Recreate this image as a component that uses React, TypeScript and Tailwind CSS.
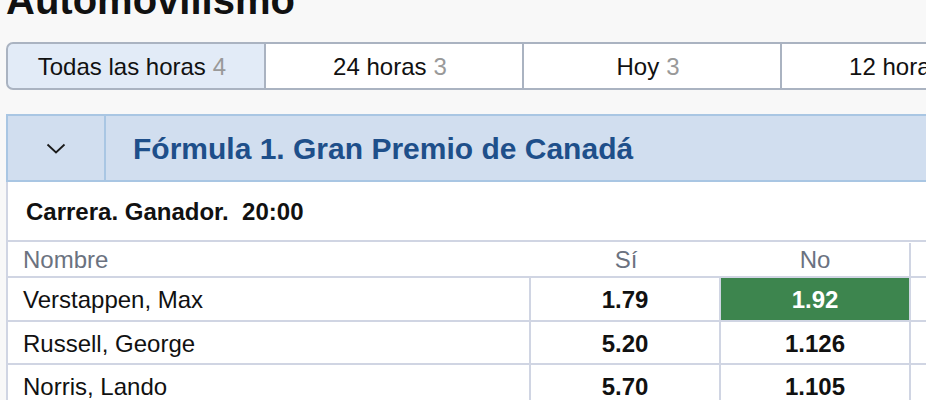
import React from "react";

const tabs = [
  { label: "Todas las horas", count: 4, active: true },
  { label: "24 horas", count: 3 },
  { label: "Hoy", count: 3 },
  { label: "12 horas", count: 3 },
];

const rows = [
  { name: "Verstappen, Max", si: "1.79", no: "1.92", extra: "1.85", hi: true },
  { name: "Russell, George", si: "5.20", no: "1.126", extra: "1.10" },
  { name: "Norris, Lando", si: "5.70", no: "1.105", extra: "1.08" },
];

export default function App() {
  return (
    <div className="w-[926px] h-[400px] overflow-hidden bg-[#f8f8f8] font-['Liberation_Sans',Arial,sans-serif] text-[#111]">
      <h1 className="ml-[6px] mt-[-20px] text-[40px] leading-[40px] font-bold whitespace-nowrap">
        Automovilismo
      </h1>

      <div className="flex w-max ml-[6px] mt-[22px]">
        {tabs.map((t, i) => (
          <div
            key={t.label}
            className={
              i === 0
                ? "w-[260px] h-[48px] flex items-center justify-center pt-[1px] pr-[8px] border-2 border-[#aab3c1] rounded-l-[7px] bg-[#e2ebf7] text-[24px] whitespace-nowrap"
                : "w-[258px] h-[48px] flex items-center justify-center pt-[1px] pr-[8px] border-y-2 border-r-2 border-[#aab3c1] bg-white text-[24px] whitespace-nowrap"
            }
          >
            <span>{t.label}</span>
            <span className="ml-[7px] text-[#999]">{t.count}</span>
          </div>
        ))}
      </div>

      <div className="ml-[6px] mt-[24px] w-[1000px]">
        <div className="flex h-[68px] border-2 border-[#a9c6e3] bg-[#d1deef]">
          <div className="w-[98px] shrink-0 border-r-2 border-[#a9c6e3] flex items-center justify-center">
            <svg width="20" height="11" viewBox="0 0 20 11" fill="none">
              <path d="M1.5 1.5 L10 9.5 L18.5 1.5" stroke="#1a1a1a" strokeWidth="1.8" />
            </svg>
          </div>
          <div className="flex items-center pl-[27px] text-[30px] font-bold text-[#1e4f8a] whitespace-nowrap">
            Fórmula 1. Gran Premio de Canadá
          </div>
        </div>

        <div className="border-l-2 border-[#d0d5e3] bg-white">
          <div className="h-[60px] border-b-2 border-[#d0d5e3] flex items-center pl-[18px] pt-[1px] text-[24px] font-bold whitespace-pre">
            {"Carrera. Ganador.  20:00"}
          </div>

          <div className="flex h-[36px] border-b-2 border-[#d0d5e3] text-[24px] text-[#6b7280] pt-[1px]">
            <div className="w-[521px] shrink-0 flex items-center pl-[15px]">Nombre</div>
            <div className="w-[190px] shrink-0 flex items-center justify-center pl-[4px]">Sí</div>
            <div className="w-[190px] shrink-0 flex items-center justify-center pl-[2px]">No</div>
            <div className="w-[190px] shrink-0 border-l-2 border-[#d0d5e3]"></div>
          </div>

          {rows.map((r, i) => (
            <div
              key={r.name}
              className={
                i === 1
                  ? "flex h-[43px] border-b-2 border-[#d0d5e3] text-[24px]"
                  : "flex h-[44px] border-b-2 border-[#d0d5e3] text-[24px]"
              }
            >
              <div className="w-[521px] shrink-0 flex items-center pl-[15px] pt-[2px] whitespace-nowrap">{r.name}</div>
              <div className="w-[190px] shrink-0 border-l-2 border-[#d0d5e3] flex items-center justify-center pt-[2px] font-bold">
                {r.si}
              </div>
              <div
                className={
                  r.hi
                    ? "w-[190px] shrink-0 border-l-2 border-[#d0d5e3] flex items-center justify-center pt-[2px] font-bold bg-[#3d854e] text-white"
                    : "w-[190px] shrink-0 border-l-2 border-[#d0d5e3] flex items-center justify-center pt-[2px] font-bold"
                }
              >
                {r.no}
              </div>
              <div className="w-[190px] shrink-0 border-l-2 border-[#d0d5e3] flex items-center pl-[15px] pt-[2px] font-bold">
                {r.extra}
              </div>
            </div>
          ))}
        </div>
      </div>
    </div>
  );
}
